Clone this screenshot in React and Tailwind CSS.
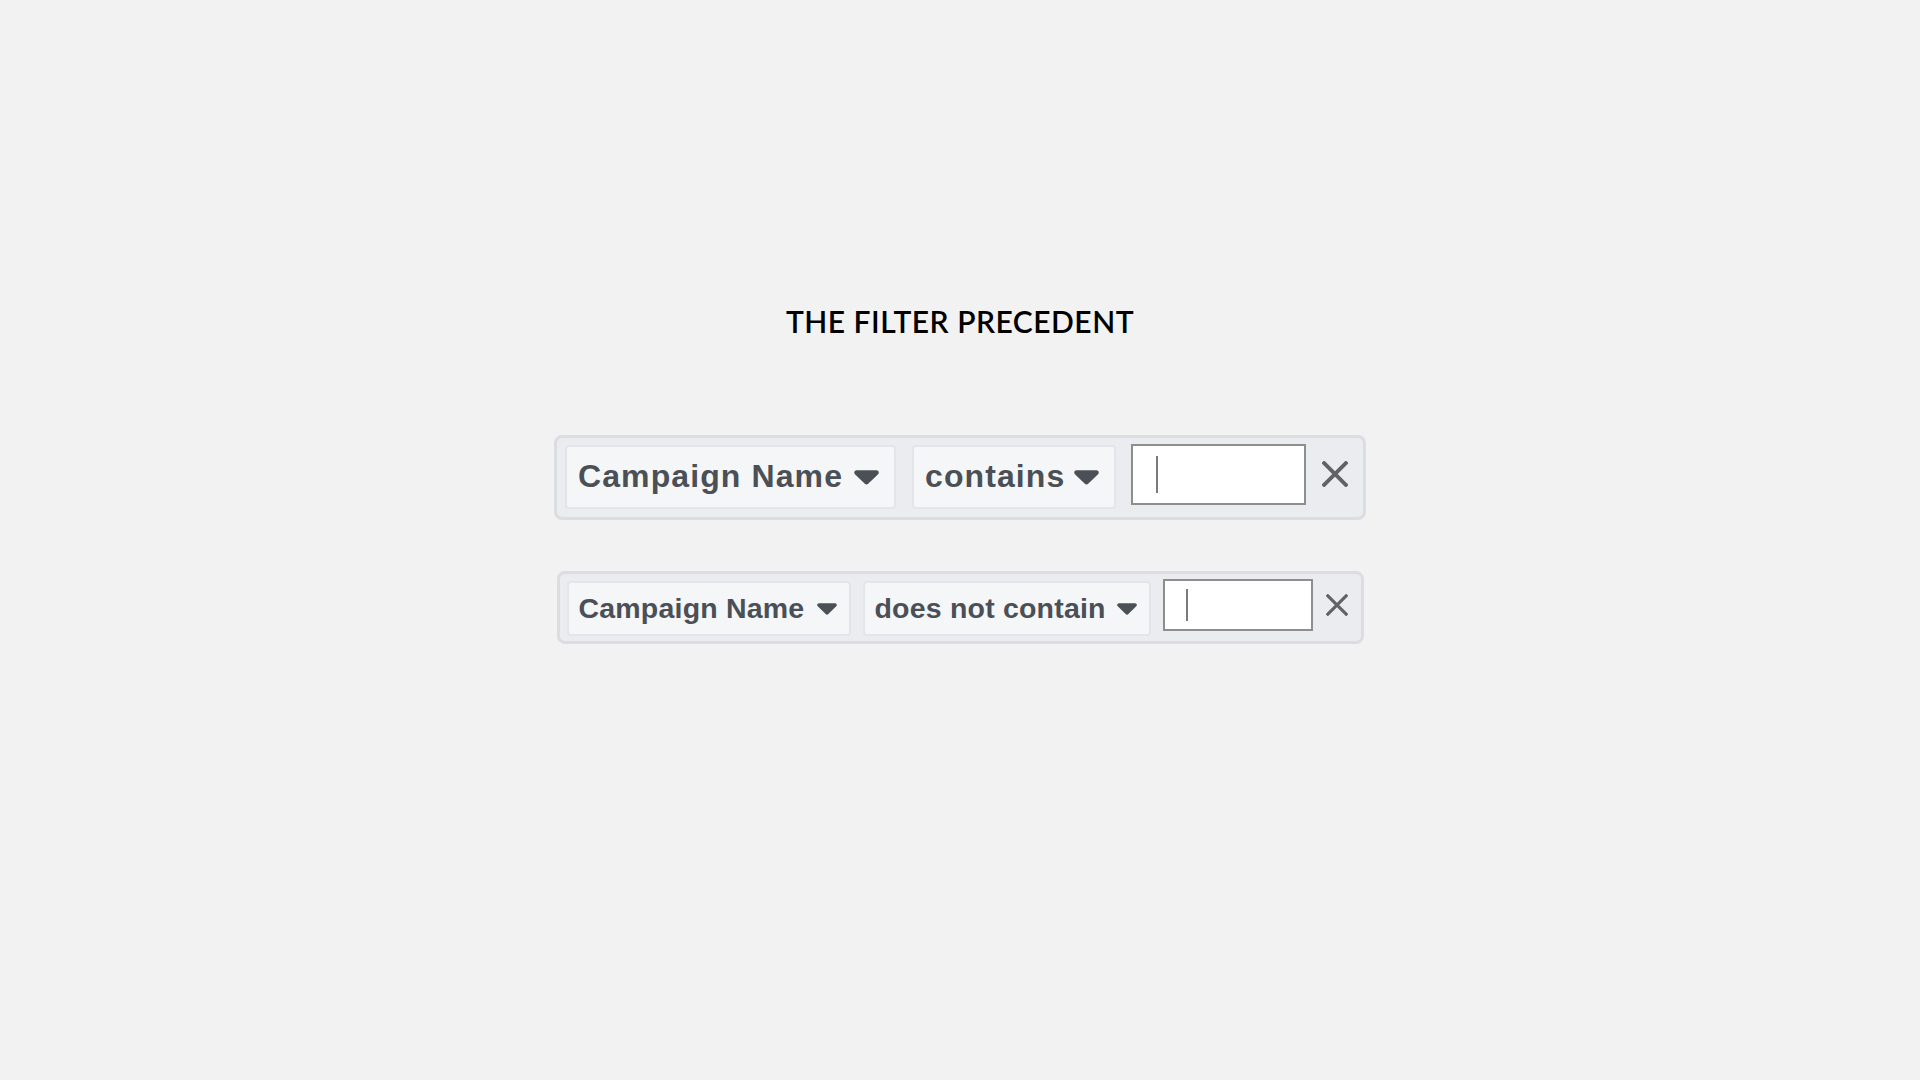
import React from "react";

const font = { fontFamily: "'Liberation Sans', Arial, sans-serif" };

function Caret({ w, h }) {
  return (
    <svg width={w} height={h} viewBox="0 0 24 14" className="shrink-0">
      <path
        d="M2.5 0h19c2.1 0 3.1 2.4 1.6 3.8l-9.5 9.3c-.9.9-2.3.9-3.2 0L.9 3.8C-.6 2.4.4 0 2.5 0z"
        fill="#4b4f56"
      />
    </svg>
  );
}

function Close({ size, stroke }) {
  return (
    <svg width={size} height={size} viewBox="0 0 24 24" className="shrink-0">
      <path
        d="M2 2L22 22M22 2L2 22"
        stroke="#5f6368"
        strokeWidth={stroke}
        strokeLinecap="square"
      />
    </svg>
  );
}

function Select({ label, big, width }) {
  return (
    <div
      className={`flex items-center justify-between bg-[#f5f6f7] border-2 border-[#e3e5e8] rounded-[4px] ${
        big
          ? "h-[64px] pl-[11px] pr-[15px] pb-[2px]"
          : "h-[55px] pl-[10px] pr-[12px] pb-[1px]"
      } ${width}`}
    >
      <span
        className={`font-bold text-[#4b4f56] leading-none whitespace-nowrap ${
          big ? "text-[32px] tracking-[1.1px]" : "text-[28.5px] tracking-[0.2px]"
        }`}
        style={font}
      >
        {label}
      </span>
      <span className={big ? "pt-[2px]" : "pt-[1px]"}>
        {big ? <Caret w={25} h={15} /> : <Caret w={20} h={12} />}
      </span>
    </div>
  );
}

function FilterRow({ big, first, second, w1, w2, inputW }) {
  return (
    <div
      className={`flex items-start bg-[#ebecef] border-[3px] border-[#dcdde1] rounded-[8px] ${
        big ? "w-[812px] h-[85px] pl-[8px] pt-[7px]" : "w-[807px] h-[73px] pl-[7px] pt-[7px]"
      }`}
    >
      <Select label={first} big={big} width={w1} />
      <div className={big ? "w-[16px]" : "w-[12px]"} />
      <Select label={second} big={big} width={w2} />
      <div className={big ? "w-[15px]" : "w-[12px]"} />
      <div
        className={`bg-white border-2 border-[#8e8e8e] flex items-center ${
          big ? "h-[61px] -mt-[1px] pl-[23px]" : "h-[52px] -mt-[2px] pl-[21px]"
        } ${inputW}`}
      >
        <div className={`w-[2px] bg-[#7b7b7b] ${big ? "h-[37px]" : "h-[32px]"}`} />
      </div>
      <div className={big ? "ml-[16px] mt-[16px]" : "ml-[13px] mt-[13px]"}>
        {big ? <Close size={26} stroke={3.6} /> : <Close size={22} stroke={3.4} />}
      </div>
    </div>
  );
}

export default function App() {
  return (
    <div className="min-h-screen w-full bg-[#f2f2f2] flex flex-col items-center pt-[303px]">
      <h1
        className="text-[30px] leading-[36px] font-semibold text-black tracking-[0.5px]"
        style={{ fontFamily: "Lato, 'Open Sans', sans-serif" }}
      >
        THE FILTER PRECEDENT
      </h1>

      <div className="mt-[96px]">
        <FilterRow
          big
          first="Campaign Name"
          second="contains"
          w1="w-[331px]"
          w2="w-[204px]"
          inputW="w-[175px]"
        />
      </div>

      <div className="mt-[51px]">
        <FilterRow
          first="Campaign Name"
          second="does not contain"
          w1="w-[284px]"
          w2="w-[288px]"
          inputW="w-[150px]"
        />
      </div>
    </div>
  );
}
